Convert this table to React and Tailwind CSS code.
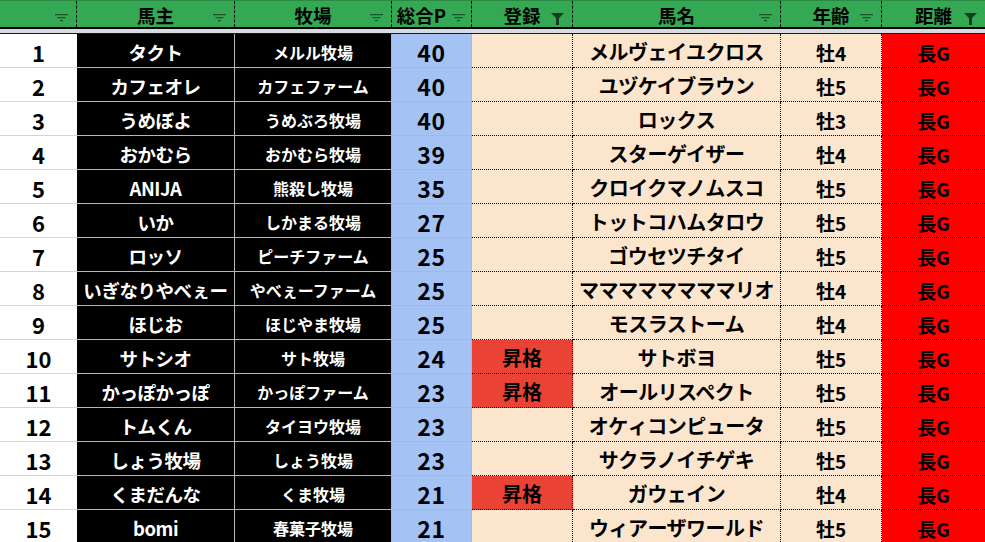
import React from 'react';

const rows = [
  [1, 'タクト', 'メルル牧場', 40, '', 'メルヴェイユクロス', '牡4'],
  [2, 'カフェオレ', 'カフェファーム', 40, '', 'ユヅケイブラウン', '牡5'],
  [3, 'うめぼよ', 'うめぶろ牧場', 40, '', 'ロックス', '牡3'],
  [4, 'おかむら', 'おかむら牧場', 39, '', 'スターゲイザー', '牡4'],
  [5, 'ANIJA', '熊殺し牧場', 35, '', 'クロイクマノムスコ', '牡5'],
  [6, 'いか', 'しかまる牧場', 27, '', 'トットコハムタロウ', '牡5'],
  [7, 'ロッソ', 'ピーチファーム', 25, '', 'ゴウセツチタイ', '牡5'],
  [8, 'いぎなりやべぇー', 'やべぇーファーム', 25, '', 'ママママママママリオ', '牡4'],
  [9, 'ほじお', 'ほじやま牧場', 25, '', 'モスラストーム', '牡4'],
  [10, 'サトシオ', 'サト牧場', 24, '昇格', 'サトボヨ', '牡5'],
  [11, 'かっぽかっぽ', 'かっぽファーム', 23, '昇格', 'オールリスペクト', '牡5'],
  [12, 'トムくん', 'タイヨウ牧場', 23, '', 'オケィコンピュータ', '牡5'],
  [13, 'しょう牧場', 'しょう牧場', 23, '', 'サクラノイチゲキ', '牡5'],
  [14, 'くまだんな', 'くま牧場', 21, '昇格', 'ガウェイン', '牡4'],
  [15, 'bomi', '春菓子牧場', 21, '', 'ウィアーザワールド', '牡5'],
];

const headers = [
  { label: '', icon: 'lines' },
  { label: '馬主', icon: 'lines' },
  { label: '牧場', icon: 'lines' },
  { label: '総合P', icon: 'lines', left: true },
  { label: '登録', icon: 'funnel' },
  { label: '馬名', icon: 'lines' },
  { label: '年齢', icon: 'lines' },
  { label: '距離', icon: 'funnel' },
];

function FilterIcon({ type }) {
  if (type === 'funnel') {
    return (
      <svg width="13" height="12" viewBox="0 0 13 12">
        <path d="M0 0 H13 L8 5 V12 H5 V5 Z" fill="#123d1f" />
      </svg>
    );
  }
  return (
    <svg width="13" height="8" viewBox="0 0 13 8">
      <rect x="0" y="0" width="13" height="1.3" fill="#1f5630" />
      <rect x="2.5" y="3" width="8" height="1.3" fill="#1f5630" />
      <rect x="5" y="6" width="3" height="1.3" fill="#1f5630" />
    </svg>
  );
}

const cols = 'grid grid-cols-[77px_158px_157px_80px_101px_208px_101px_103px]';
const cell = 'flex items-center justify-center pt-[3px] leading-none whitespace-nowrap';

export default function App() {
  return (
    <div
      className="w-[985px] h-[542px] overflow-hidden bg-white text-black font-bold"
      style={{ fontFamily: '"Noto Sans CJK JP", "Noto Sans", sans-serif' }}
    >
      <div className={`${cols} h-[27px] bg-[#35a853] border-t border-[#2a8a44]`}>
        {headers.map((h, i) => (
          <div
            key={i}
            className={`relative flex items-center justify-center pt-[2px] text-[18.5px] leading-none ${i < 7 ? 'border-r border-dashed border-black' : ''}`}
          >
            <span className={h.left ? 'mr-5' : ''}>{h.label}</span>
            <span className={`absolute ${h.left ? 'right-1.5' : 'right-2'} ${h.icon === 'funnel' ? 'top-[12px]' : 'top-[13px]'} flex`}>
              <FilterIcon type={h.icon} />
            </span>
          </div>
        ))}
      </div>
      <div className="h-[2px] bg-black" />
      <div className="h-[4px] bg-[#d6dae2]" />
      <div className="border-t border-[#1b1b1b]">
        {rows.map((r) => (
          <div key={r[0]} className={`${cols} h-[34px]`}>
            <div className={`${cell} bg-white border-b border-[#d4d4d4] text-[22px]`}>
              {r[0]}
            </div>
            <div className={`${cell} bg-black text-white border-r border-b border-[#b7b7b7] text-[18.5px] tracking-tight`}>
              {r[1]}
            </div>
            <div className={`${cell} bg-black text-white border-r border-b border-[#b7b7b7] text-[16px]`}>
              {r[2]}
            </div>
            <div className={`${cell} bg-[#a4c2f4] border-r border-b border-[#b7b7b7] text-[23px] tracking-wide`}>
              {r[3]}
            </div>
            <div
              className={`${cell} border-r border-b border-dotted border-black text-[20px] ${r[4] ? 'bg-[#ea4335]' : 'bg-[#fce5cd]'}`}
            >
              {r[4]}
            </div>
            <div className={`${cell} bg-[#fce5cd] border-r border-b border-dotted border-black text-[20px] tracking-tight`}>
              {r[5]}
            </div>
            <div className={`${cell} bg-[#fce5cd] border-r border-b border-dotted border-black text-[19px]`}>
              {r[6]}
            </div>
            <div className={`${cell} bg-[#ff0000] border-b border-dotted border-black text-[19px]`}>
              長G
            </div>
          </div>
        ))}
      </div>
    </div>
  );
}
